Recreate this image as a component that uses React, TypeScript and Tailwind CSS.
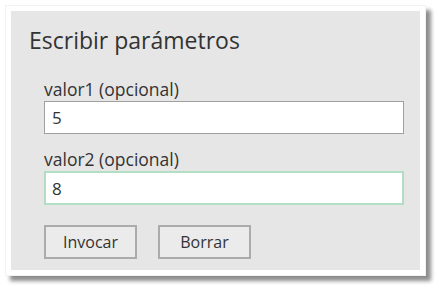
import React from 'react';

export default function App() {
  return (
    <div className="w-[439px] h-[289px] bg-white pt-[5px] pl-[5px] font-['Segoe_UI','Open_Sans',sans-serif] text-[#333]">
      <div className="w-[421px] h-[271px] bg-white border border-[#f2f2f2] p-[5px] shadow-[5px_5px_4px_rgba(0,0,0,0.45)]">
        <div className="h-full bg-[#e6e6e6] pt-[14px] pl-[18px] pr-[16px]">
          <h1 className="text-[23px] leading-[30px] text-[#333]">Escribir parámetros</h1>

          <div className="pl-[15px] mt-[22px]">
            <label className="block text-[17.5px] leading-[24px]">valor1 (opcional)</label>
            <input
              defaultValue="5"
              className="w-full h-[33px] bg-white border border-[#a0a0a0] px-[7px] text-[17px] outline-none"
            />

            <label className="block mt-[13px] text-[17.5px] leading-[24px]">valor2 (opcional)</label>
            <input
              defaultValue="8"
              className="w-full h-[34px] bg-white border-2 border-[#b2dec4] px-[6px] text-[17px] outline-none"
            />

            <div className="flex gap-[21px] mt-[20px]">
              <button className="w-[93px] h-[34px] bg-[#ebebeb] border-2 border-[#ababab] text-[16px] text-[#333]">Invocar</button>
              <button className="w-[93px] h-[34px] bg-[#ebebeb] border-2 border-[#ababab] text-[16px] text-[#333]">Borrar</button>
            </div>
          </div>
        </div>
      </div>
    </div>
  );
}
